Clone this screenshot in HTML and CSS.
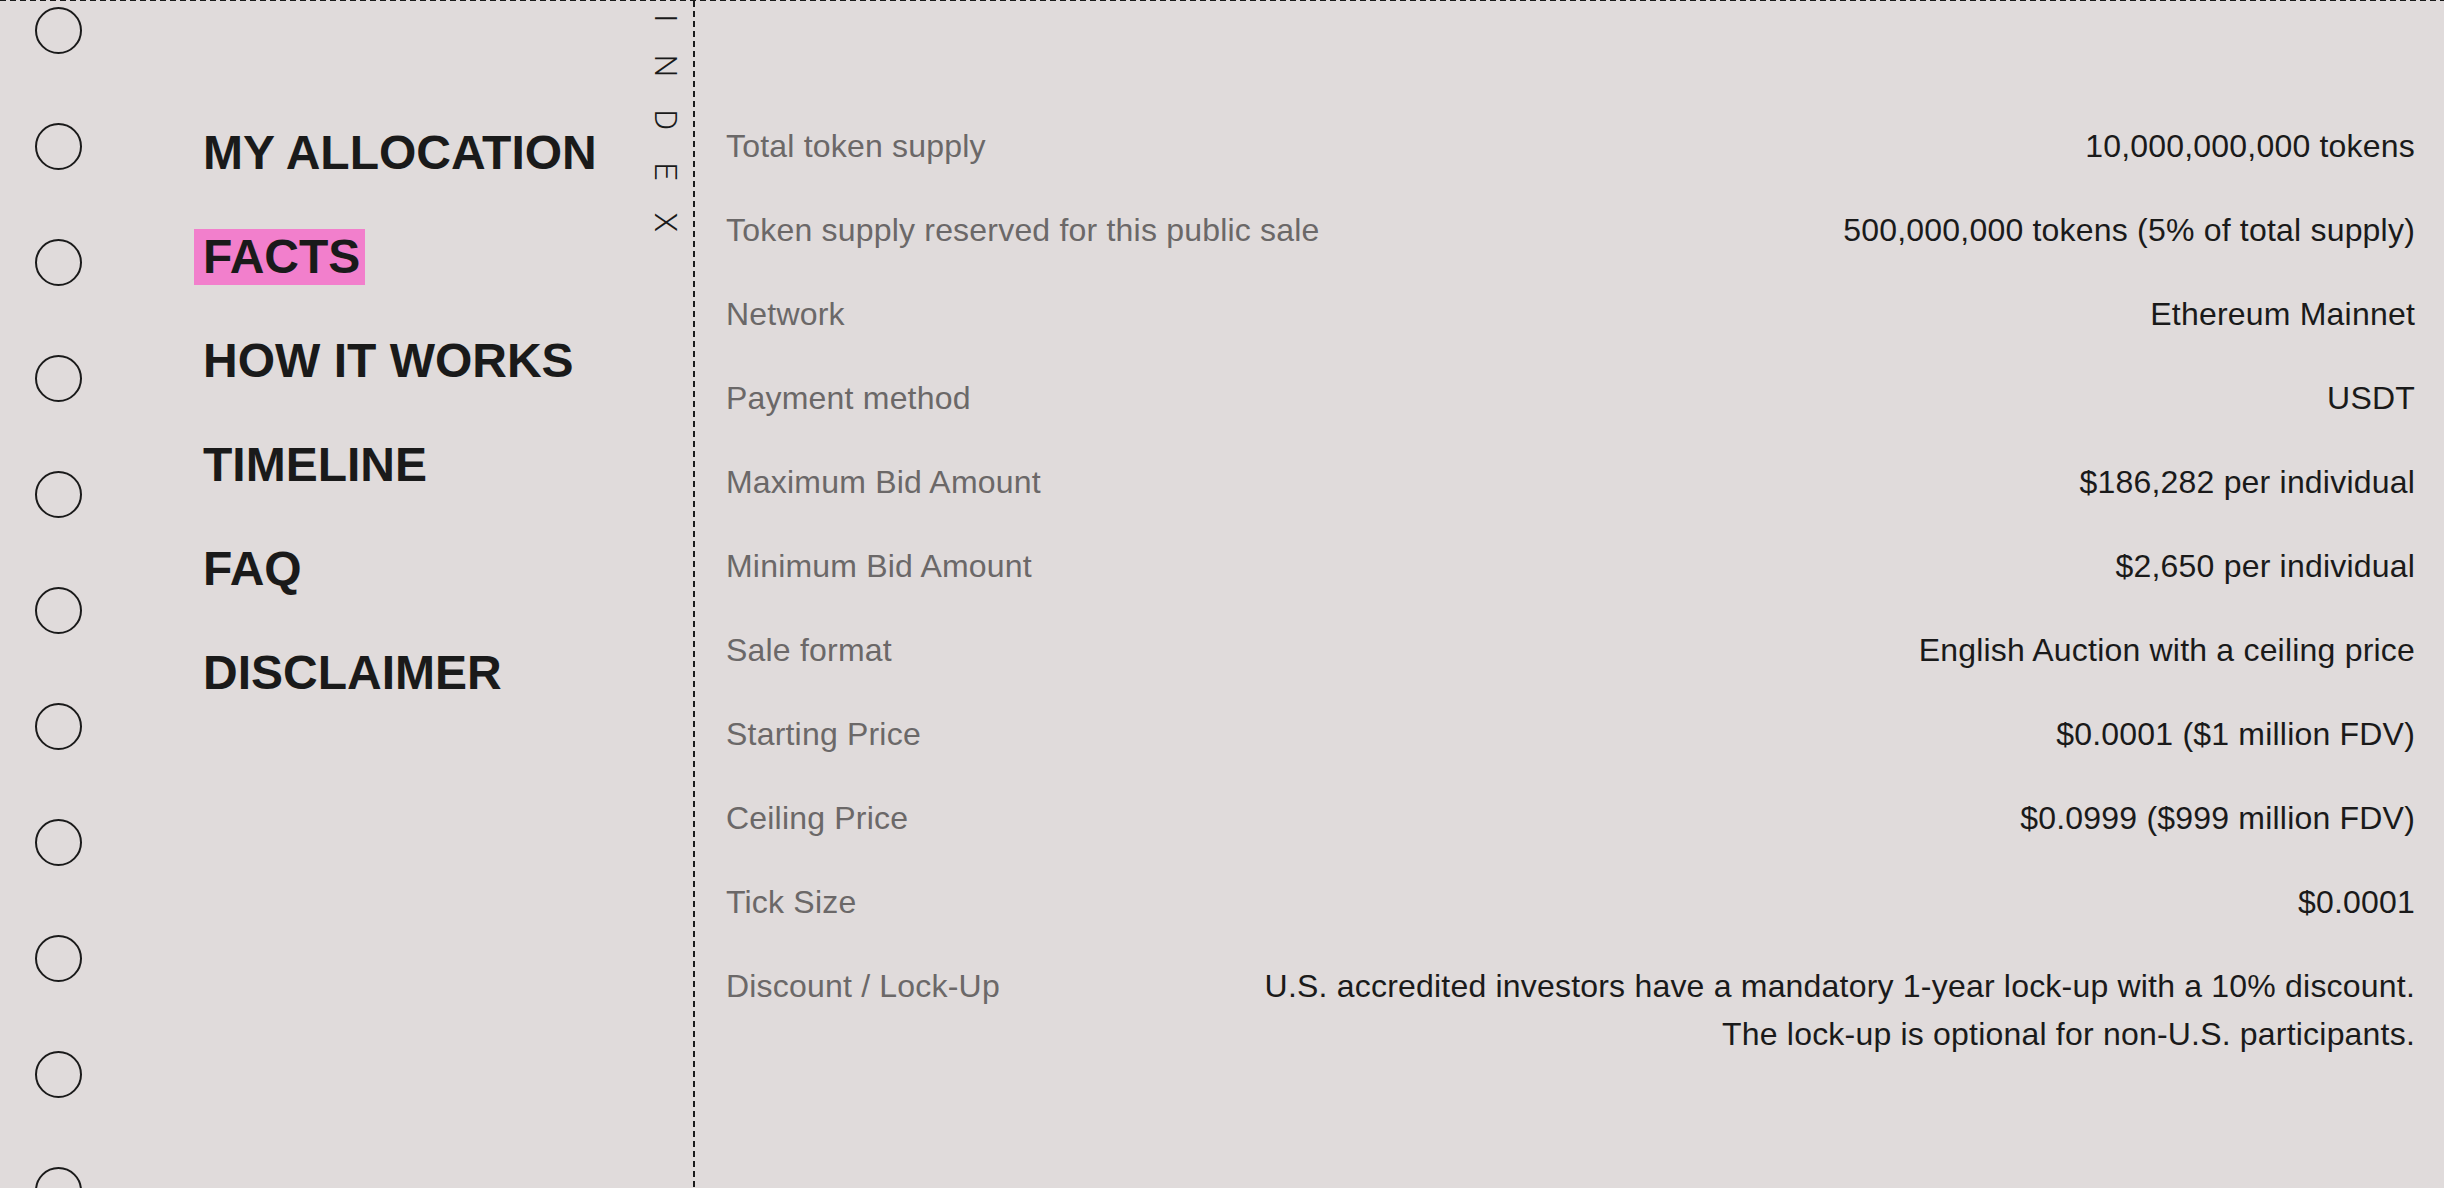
FILE: index.html
```html
<!DOCTYPE html>
<html lang="en">

<head>
  <meta charset="UTF-8">
  <meta name="viewport" content="width=device-width, initial-scale=1.0">
  <title>Public Sale - Facts</title>

  <link rel="stylesheet" href="styles.css">
</head>

<body>
  <div class="page">
    <aside class="sidebar">
      <div class="holes">
        <span class="hole"></span>
        <span class="hole"></span>
        <span class="hole"></span>
        <span class="hole"></span>
        <span class="hole"></span>
        <span class="hole"></span>
        <span class="hole"></span>
        <span class="hole"></span>
        <span class="hole"></span>
        <span class="hole"></span>
        <span class="hole"></span>
      </div>

      <nav class="index-nav">
        <ul>
          <li><a href="#allocation">MY ALLOCATION</a></li>
          <li><a href="#facts" class="active">FACTS</a></li>
          <li><a href="#how">HOW IT WORKS</a></li>
          <li><a href="#timeline">TIMELINE</a></li>
          <li><a href="#faq">FAQ</a></li>
          <li><a href="#disclaimer">DISCLAIMER</a></li>
        </ul>
      </nav>

      <div class="index-label">INDEX</div>
    </aside>

    <main id="facts" class="facts">
      <div class="fact">
        <span class="fact-label">Total token supply</span>
        <span class="fact-value">10,000,000,000 tokens</span>
      </div>
      <div class="fact">
        <span class="fact-label">Token supply reserved for this public sale</span>
        <span class="fact-value">500,000,000 tokens (5% of total supply)</span>
      </div>
      <div class="fact">
        <span class="fact-label">Network</span>
        <span class="fact-value">Ethereum Mainnet</span>
      </div>
      <div class="fact">
        <span class="fact-label">Payment method</span>
        <span class="fact-value">USDT</span>
      </div>
      <div class="fact">
        <span class="fact-label">Maximum Bid Amount</span>
        <span class="fact-value">$186,282 per individual</span>
      </div>
      <div class="fact">
        <span class="fact-label">Minimum Bid Amount</span>
        <span class="fact-value">$2,650 per individual</span>
      </div>
      <div class="fact">
        <span class="fact-label">Sale format</span>
        <span class="fact-value">English Auction with a ceiling price</span>
      </div>
      <div class="fact">
        <span class="fact-label">Starting Price</span>
        <span class="fact-value">$0.0001 ($1 million FDV)</span>
      </div>
      <div class="fact">
        <span class="fact-label">Ceiling Price</span>
        <span class="fact-value">$0.0999 ($999 million FDV)</span>
      </div>
      <div class="fact">
        <span class="fact-label">Tick Size</span>
        <span class="fact-value">$0.0001</span>
      </div>
      <div class="fact">
        <span class="fact-label">Discount / Lock-Up</span>
        <span class="fact-value">U.S. accredited investors have a mandatory 1-year lock-up with a 10% discount.<br>The lock-up is optional for non-U.S. participants.</span>
      </div>
    </main>
  </div>
</body>

</html>
```

FILE: styles.css
```css
body {
  margin: 0;
  font-family: "Liberation Sans", Arial, sans-serif;
  background-color: #e0dbdb;
  color: #1a1a1a;
  overflow: hidden;
}

.page {
  display: flex;
  height: 100vh;
  padding-top: 1px;
  box-sizing: border-box;
  background: repeating-linear-gradient(to right, #1a1a1a 0 6px, transparent 6px 10px) top left / 100% 1px no-repeat;
}

/* left index column */
.sidebar {
  display: flex;
  align-items: flex-start;
  width: 695px;
  flex-shrink: 0;
  height: 100%;
  overflow: hidden;
  background: repeating-linear-gradient(to bottom, #1a1a1a 0 6px, transparent 6px 10px) right top / 2px 100% no-repeat;
}

.holes {
  display: flex;
  flex-direction: column;
  gap: 69px;
  width: 194px;
  flex-shrink: 0;
  padding: 6px 0 0 35px;
  box-sizing: border-box;
}

.hole {
  display: block;
  width: 47px;
  height: 47px;
  border: 2px solid #1a1a1a;
  border-radius: 50%;
  box-sizing: border-box;
  flex-shrink: 0;
}

.index-nav {
  flex: 1;
}

.index-nav ul {
  list-style: none;
  margin: 0;
  padding: 124px 0 0;
  display: flex;
  flex-direction: column;
  gap: 48px;
}

.index-nav li {
  font-size: 48px;
  font-weight: 700;
  line-height: 56px;
  height: 56px;
}

.index-nav a {
  display: inline-block;
  padding: 0 5px 0 9px;
  color: #1a1a1a;
  text-decoration: none;
}

.index-nav a.active {
  background: #f27fcc;
}

.index-label {
  writing-mode: vertical-rl;
  font-family: Roboto, "Liberation Sans", sans-serif;
  font-weight: 300;
  font-size: 32px;
  line-height: 32px;
  letter-spacing: 32px;
  color: #1a1a1a;
  padding-top: 13px;
  margin-right: 13px;
}

/* facts table */
.facts {
  flex: 1;
  padding: 103px 29px 0 31px;
}

.fact {
  display: flex;
  justify-content: space-between;
  gap: 40px;
  padding: 18px 0;
  font-size: 32px;
  line-height: 48px;
  letter-spacing: 0.2px;
}

.fact-label {
  color: #6b6868;
  white-space: nowrap;
}

.fact-value {
  text-align: right;
}
```
